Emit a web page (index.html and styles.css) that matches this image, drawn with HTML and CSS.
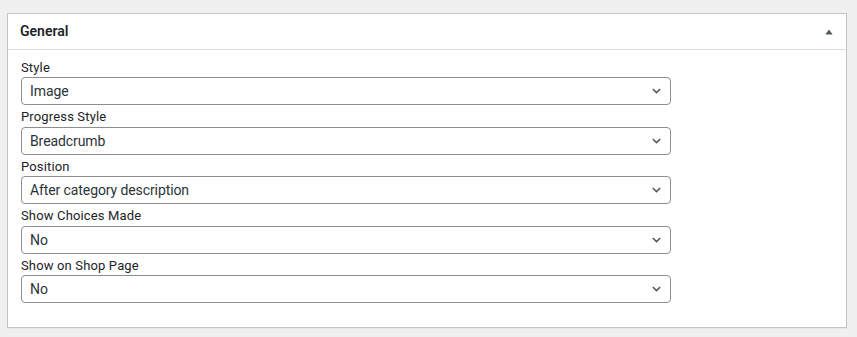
FILE: index.html
```html
<!DOCTYPE html>
<html lang="en">
<head>
<meta charset="utf-8">
<title>General</title>
<link rel="stylesheet" href="styles.css">
</head>
<body>
<div class="wrap">
  <div class="postbox">
    <div class="postbox-header">
      <h2 class="hndle">General</h2>
      <button class="toggle" type="button" aria-label="Toggle panel">
        <svg width="8" height="6" viewBox="0 0 8 6"><path d="M4 0.5 L7.6 5.5 L0.4 5.5 Z" fill="#50575e"/></svg>
      </button>
    </div>
    <div class="inside">
      <div class="field">
        <label class="field-label">Style</label>
        <div class="select-wrap">
          <select class="select"><option>Image</option></select>
          <svg class="chev" width="9" height="6" viewBox="0 0 9 6"><path d="M0.8 1 L4.5 4.6 L8.2 1" fill="none" stroke="#50575e" stroke-width="1.5"/></svg>
        </div>
      </div>
      <div class="field">
        <label class="field-label">Progress Style</label>
        <div class="select-wrap">
          <select class="select"><option>Breadcrumb</option></select>
          <svg class="chev" width="9" height="6" viewBox="0 0 9 6"><path d="M0.8 1 L4.5 4.6 L8.2 1" fill="none" stroke="#50575e" stroke-width="1.5"/></svg>
        </div>
      </div>
      <div class="field">
        <label class="field-label">Position</label>
        <div class="select-wrap">
          <select class="select"><option>After category description</option></select>
          <svg class="chev" width="9" height="6" viewBox="0 0 9 6"><path d="M0.8 1 L4.5 4.6 L8.2 1" fill="none" stroke="#50575e" stroke-width="1.5"/></svg>
        </div>
      </div>
      <div class="field">
        <label class="field-label">Show Choices Made</label>
        <div class="select-wrap">
          <select class="select"><option>No</option></select>
          <svg class="chev" width="9" height="6" viewBox="0 0 9 6"><path d="M0.8 1 L4.5 4.6 L8.2 1" fill="none" stroke="#50575e" stroke-width="1.5"/></svg>
        </div>
      </div>
      <div class="field">
        <label class="field-label">Show on Shop Page</label>
        <div class="select-wrap">
          <select class="select"><option>No</option></select>
          <svg class="chev" width="9" height="6" viewBox="0 0 9 6"><path d="M0.8 1 L4.5 4.6 L8.2 1" fill="none" stroke="#50575e" stroke-width="1.5"/></svg>
        </div>
      </div>
    </div>
  </div>
</div>
</body>
</html>
```
FILE: styles.css
```css
html, body {
  margin: 0;
  padding: 0;
  background: #f0f0f1;
  font-family: Roboto, "Liberation Sans", sans-serif;
  color: #1d2327;
}

.wrap {
  padding: 13px 10px 9px 7px;
}

.postbox {
  background: #fff;
  border: 1px solid #c3c4c7;
  box-shadow: 0 1px 1px rgba(0, 0, 0, 0.04);
}

.postbox-header {
  height: 35px;
  display: flex;
  align-items: center;
  justify-content: space-between;
  border-bottom: 1px solid #dcdcde;
  padding: 0 13px 0 12px;
}

.hndle {
  margin: 0;
  font-size: 14px;
  font-weight: 600;
  line-height: 1.4;
  color: #1d2327;
}

.toggle {
  border: 0;
  background: none;
  padding: 0;
  width: 8px;
  height: 20px;
  display: flex;
  align-items: center;
  justify-content: center;
}

.inside {
  padding: 7.5px 13px 24px;
  display: flex;
  flex-direction: column;
  gap: 2px;
}

.field {
  display: flex;
  flex-direction: column;
}

.field-label {
  font-size: 13px;
  line-height: 19.5px;
  letter-spacing: 0.15px;
  color: #1d2327;
}

.select-wrap {
  position: relative;
  width: 650px;
}

.select {
  appearance: none;
  -webkit-appearance: none;
  box-sizing: border-box;
  width: 650px;
  height: 28px;
  margin: 0;
  padding: 0 24px 0 8px;
  border: 1px solid #8c8f94;
  border-radius: 4px;
  background: #fff;
  font-family: inherit;
  font-size: 14px;
  letter-spacing: -0.1px;
  color: #2c3338;
}

.chev {
  position: absolute;
  right: 10px;
  top: 11px;
  pointer-events: none;
}
```
